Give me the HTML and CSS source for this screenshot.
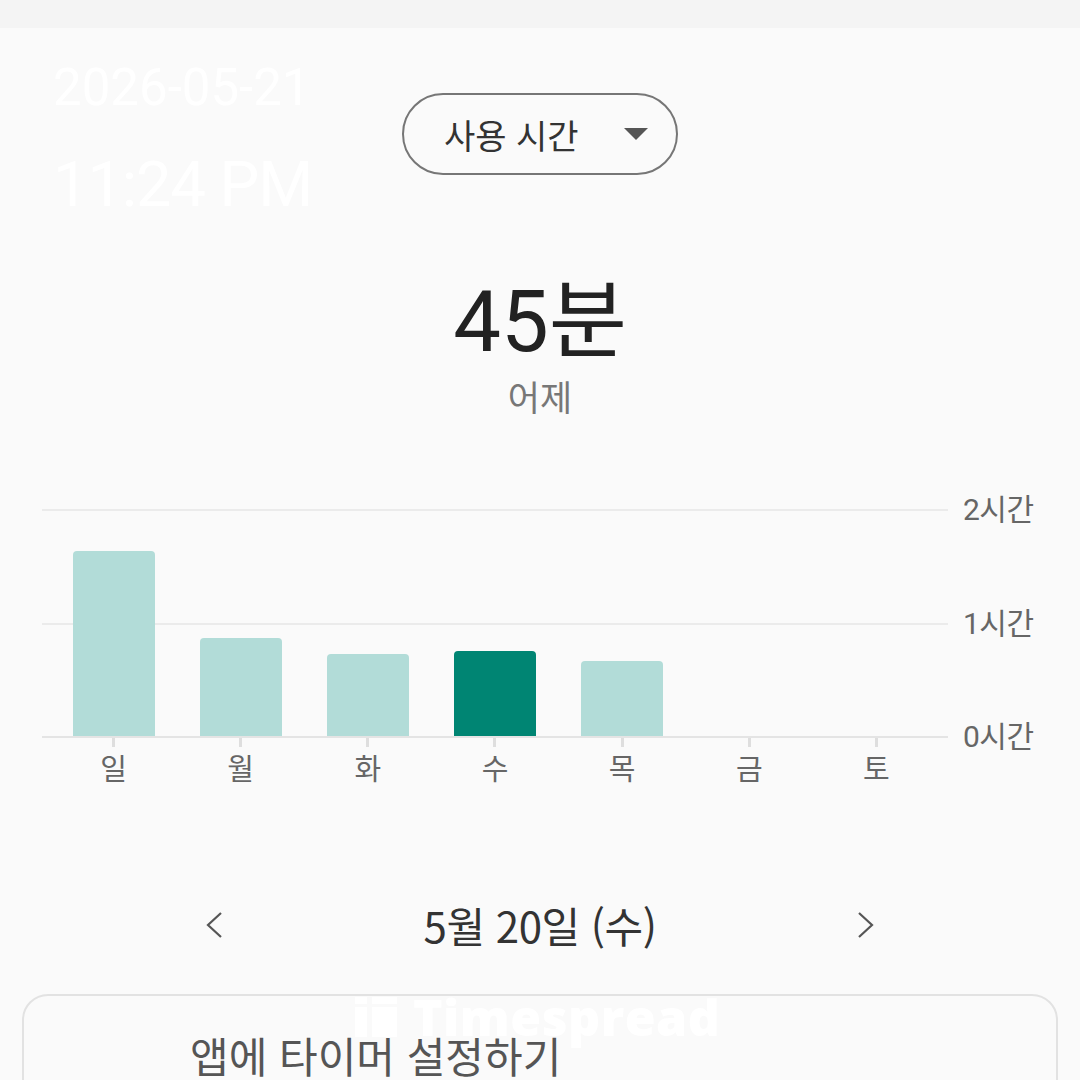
FILE: index.html
```html
<!DOCTYPE html>
<html lang="ko">

<head>
    <meta charset="UTF-8">
    <meta name="viewport" content="width=device-width, initial-scale=1.0">
    <title>디지털 웰빙</title>
    <link rel="stylesheet" href="styles.css">
</head>

<body>
    <div class="status-bar"></div>

    <main class="screen">
        <div class="stamp">
            <div class="stamp-date">2026-05-21</div>
            <div class="stamp-time">11:24 PM</div>
        </div>

        <div class="selector">
            <button class="pill">사용 시간<span class="caret"></span></button>
        </div>

        <div class="summary">
            <div class="total">45분</div>
            <div class="when">어제</div>
        </div>

        <section class="chart">
            <div class="plot-col">
                <div class="plot">
                    <div class="grid-lines">
                        <div class="band"></div>
                        <div class="band"></div>
                    </div>
                    <div class="bars">
                        <div class="slot"><div class="bar" style="height: 185px"></div></div>
                        <div class="slot"><div class="bar" style="height: 98px"></div></div>
                        <div class="slot"><div class="bar" style="height: 82px"></div></div>
                        <div class="slot"><div class="bar active" style="height: 85px"></div></div>
                        <div class="slot"><div class="bar" style="height: 75px"></div></div>
                        <div class="slot"></div>
                        <div class="slot"></div>
                    </div>
                </div>
                <div class="days">
                    <div class="day"><span class="tick"></span>일</div>
                    <div class="day"><span class="tick"></span>월</div>
                    <div class="day"><span class="tick"></span>화</div>
                    <div class="day"><span class="tick"></span>수</div>
                    <div class="day"><span class="tick"></span>목</div>
                    <div class="day"><span class="tick"></span>금</div>
                    <div class="day"><span class="tick"></span>토</div>
                </div>
            </div>
            <div class="axis">
                <span>2시간</span>
                <span>1시간</span>
                <span>0시간</span>
            </div>
        </section>

        <div class="date-nav">
            <button class="arrow" aria-label="이전">
                <svg width="18" height="28" viewBox="0 0 18 28"><polyline points="16,2 3,14 16,26" fill="none" stroke="#555" stroke-width="2.2"/></svg>
            </button>
            <div class="date">5월 20일 (수)</div>
            <button class="arrow" aria-label="다음">
                <svg width="18" height="28" viewBox="0 0 18 28"><polyline points="2,2 15,14 2,26" fill="none" stroke="#555" stroke-width="2.2"/></svg>
            </button>
        </div>

        <div class="card">
            <p>앱에 타이머 설정하기</p>
        </div>

        <div class="brand">
            <svg width="42" height="40" viewBox="0 0 42 40">
                <rect x="0" y="0" width="12" height="7" fill="#fff"/>
                <rect x="0" y="10" width="12" height="30" fill="#fff"/>
                <rect x="17" y="0" width="25" height="7" fill="#fff"/>
                <rect x="17" y="10" width="25" height="30" fill="#fff"/>
            </svg>
            <span>Timespread</span>
        </div>
    </main>
</body>

</html>
```

FILE: styles.css
```css
body {
    margin: 0;
    padding: 0;
    background-color: #fafafa;
    font-family: Roboto, "Noto Sans CJK KR", sans-serif;
    color: #333;
    overflow: hidden;
}

.status-bar {
    height: 28px;
    background-color: #f4f4f4;
}

.screen {
    position: relative;
    display: flex;
    flex-direction: column;
    align-items: center;
}

/* faint white timestamp over the screenshot */
.stamp {
    position: absolute;
    left: 53px;
    top: 30px;
    color: #fff;
    font-family: Roboto, sans-serif;
}

.stamp-date {
    font-size: 51px;
    line-height: 60px;
    letter-spacing: 0;
}

.stamp-time {
    font-size: 63px;
    line-height: 70px;
    margin-top: 32px;
    letter-spacing: -1px;
}

.selector {
    margin-top: 65px;
}

.pill {
    display: flex;
    align-items: center;
    width: 276px;
    height: 82px;
    padding: 0 28px 0 40px;
    box-sizing: border-box;
    border: 2px solid #767676;
    border-radius: 41px;
    background-color: transparent;
    font-family: "Noto Sans CJK KR", sans-serif;
    font-size: 34px;
    color: #333;
}

.caret {
    margin-left: auto;
    width: 0;
    height: 0;
    border-left: 12px solid transparent;
    border-right: 12px solid transparent;
    border-top: 12px solid #555;
}

.summary {
    margin-top: 97px;
    text-align: center;
}

.total {
    font-size: 85px;
    line-height: 100px;
    color: #222;
}

.when {
    margin-top: 4px;
    font-family: "Noto Sans CJK KR", sans-serif;
    font-size: 35px;
    line-height: 40px;
    color: #777;
}

.chart {
    display: flex;
    align-self: stretch;
    margin-top: 77px;
    padding-left: 42px;
}

.plot-col {
    width: 906px;
    margin-top: 16px;
}

.plot {
    display: grid;
    height: 227px;
    border-bottom: 2px solid #e4e4e4;
}

.grid-lines,
.bars {
    grid-area: 1 / 1;
}

.band {
    height: 113.5px;
    box-sizing: border-box;
    border-top: 2px solid #ebebeb;
}

.bars,
.days {
    display: grid;
    grid-template-columns: repeat(7, 1fr);
    padding: 0 8px;
}

.slot {
    display: flex;
    justify-content: center;
    align-items: flex-end;
}

.bar {
    width: 82px;
    border-radius: 4px 4px 0 0;
    background-color: #b2dcd8;
}

.bar.active {
    background-color: #008573;
}

.day {
    display: flex;
    flex-direction: column;
    align-items: center;
    font-family: "Noto Sans CJK KR", sans-serif;
    font-size: 29px;
    line-height: 34px;
    color: #666;
}

.tick {
    width: 3px;
    height: 9px;
    margin-bottom: 3px;
    background-color: #dedede;
}

.axis {
    display: flex;
    flex-direction: column;
    justify-content: space-between;
    height: 261px;
    margin-left: 15px;
    font-size: 30px;
    line-height: 34px;
    color: #666;
    letter-spacing: -0.5px;
}

.date-nav {
    display: flex;
    align-items: center;
    justify-content: space-between;
    width: 670px;
    height: 50px;
    margin-top: 116px;
}

.arrow {
    display: flex;
    padding: 0;
    border: none;
    background: none;
}

.date {
    font-family: "Noto Sans CJK KR", sans-serif;
    font-size: 42px;
    line-height: 50px;
    color: #333;
    letter-spacing: -0.5px;
}

.card {
    align-self: stretch;
    margin: 44px 22px 0;
    height: 200px;
    border: 2px solid #e2e2e2;
    border-radius: 26px;
    background-color: #fafafa;
}

.card p {
    margin: 33px 0 0 166px;
    font-family: "Noto Sans CJK KR", sans-serif;
    font-size: 42px;
    line-height: 52px;
    color: #555;
}

/* watermark logo */
.brand {
    position: absolute;
    left: 355px;
    top: 955px;
    display: flex;
    align-items: center;
    gap: 16px;
    color: #fff;
}

.brand span {
    font-family: "Open Sans", sans-serif;
    font-weight: 800;
    font-size: 50px;
    letter-spacing: 0.5px;
}
```
